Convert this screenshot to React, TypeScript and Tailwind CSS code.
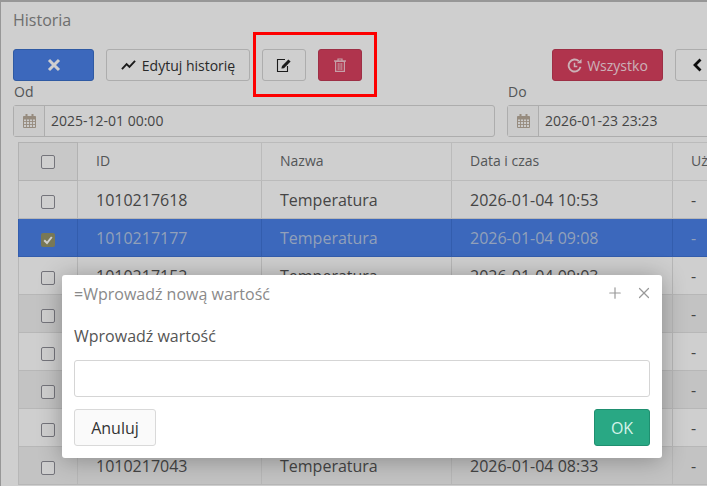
import { Plus, X } from "lucide-react";

const rows = [
  { id: "1010217618", time: "2026-01-04 10:53" },
  { id: "1010217177", time: "2026-01-04 09:08", selected: true },
  { id: "1010217152", time: "2026-01-04 09:03" },
  { id: "1010217131", time: "2026-01-04 08:58" },
  { id: "1010217105", time: "2026-01-04 08:53" },
  { id: "1010217086", time: "2026-01-04 08:48" },
  { id: "1010217064", time: "2026-01-04 08:38" },
  { id: "1010217043", time: "2026-01-04 08:33" },
];

const Check = ({ checked = false, className = "" }: { checked?: boolean; className?: string }) =>
  checked ? (
    <span className={`mx-auto flex h-[14px] w-[14px] items-center justify-center rounded-[2px] bg-[#94946a] text-white ${className}`}>
      <svg viewBox="0 0 10 10" className="h-[10px] w-[10px]" fill="none" stroke="currentColor" strokeWidth="2">
        <path d="M1.2 5.2 4 8l4.8-6" />
      </svg>
    </span>
  ) : (
    <span className={`mx-auto block h-[14px] w-[14px] rounded-[2px] border border-[#8f8f98] bg-white ${className}`} />
  );

const CalendarIcon = () => (
  <svg viewBox="0 0 13 14" className="h-[14px] w-[13px]" fill="none" stroke="currentColor" strokeWidth="1">
    <path d="M.5 2.5h12v11H.5z" />
    <path d="M.5 3h12v2H.5z" fill="currentColor" />
    <path d="M3.5 0v3M9.5 0v3" strokeWidth="2" />
    <path d="M.5 7.5h12M.5 10.5h12M3.5 5v8M6.5 5v8M9.5 5v8" strokeWidth="0.9" />
  </svg>
);

const DateInput = ({ value, className }: { value: string; className: string }) => (
  <div className={`flex h-[32px] rounded-[3px] border border-[#d5d5d5] bg-white ${className}`}>
    <span className="flex w-[31px] shrink-0 items-center justify-center border-r border-[#d5d5d5] bg-[#fafafa] text-[#b9ac9c]">
      <CalendarIcon />
    </span>
    <span className="pl-[6px] text-[14px] leading-[30px] text-[#555]">{value}</span>
  </div>
);

export default function App() {
  return (
    <div className="relative h-[486px] w-[707px] overflow-hidden bg-white font-['Open_Sans',sans-serif] text-[#676a6c]">
      <div className="h-[486px] w-[760px] border-t-2 border-l border-[#bbb] pl-[12px]">
        <h1 className="pt-[8px] text-[16px] leading-[20px] text-[#888]">Historia</h1>

        <div className="mt-[19px] flex h-[32px] items-center">
          <button className="flex h-[32px] w-[81px] items-center justify-center rounded-[3px] border border-[#3a6fc9] bg-[#4a80e8] text-white">
            <svg viewBox="0 0 14 14" className="h-[14px] w-[14px]" fill="none" stroke="currentColor" strokeWidth="3">
              <path d="M2 2l10 10M12 2 2 12" />
            </svg>
          </button>
          <button className="ml-[12px] flex h-[32px] w-[144px] items-center justify-center gap-[6px] rounded-[3px] border border-[#d5d5d5] bg-white text-[14px] text-[#333]">
            <svg viewBox="0 0 16 12" className="h-[12px] w-[15px] text-[#222]" fill="none" stroke="currentColor" strokeWidth="2">
              <path d="M1 10.5 6 5l3 3 6-6.5" />
            </svg>
            Edytuj historię
          </button>
          <button className="ml-[12px] flex h-[32px] w-[44px] items-center justify-center rounded-[3px] border border-[#d5d5d5] bg-white text-[#222]">
            <svg viewBox="0 0 16 16" className="h-[16px] w-[16px]">
              <path d="M9 2.5H1.5v12h10V9" fill="none" stroke="currentColor" strokeWidth="1.1" />
              <path d="M6 9 12.4 2.4l2.2 2.2L8 11.2l-2.6.4z" fill="currentColor" />
            </svg>
          </button>
          <button className="ml-[12px] flex h-[32px] w-[44px] items-center justify-center rounded-[3px] border border-[#c23a56] bg-[#d9415f] text-[#f4c6d0]">
            <svg viewBox="0 0 12 14" className="h-[14px] w-[12px]" fill="none" stroke="currentColor">
              <path d="M0 3h12" strokeWidth="1.4" />
              <path d="M4 3V1h4v2" strokeWidth="1.2" />
              <path d="M1.6 3.5h8.8V13.4H1.6z" strokeWidth="1.2" />
              <path d="M4.2 5v7M6 5v7M7.8 5v7" strokeWidth="0.9" />
            </svg>
          </button>
          <button className="ml-[190px] flex h-[32px] w-[111px] items-center justify-center gap-[5px] rounded-[3px] border border-[#c23a56] bg-[#d9415f] text-[14px] text-[#fbdbe2]">
            <svg viewBox="0 0 16 16" className="h-[15px] w-[15px]" fill="none" stroke="currentColor" strokeWidth="2">
              <path d="M14.4 9.5A6.4 6.4 0 1 1 12.6 3.4" />
              <path d="M8 5v4h3" strokeWidth="1.6" />
              <path d="M10.5 5.5h5V1z" fill="currentColor" stroke="none" />
            </svg>
            Wszystko
          </button>
          <button className="ml-[12px] flex h-[32px] w-[60px] items-center rounded-[3px] border border-[#d5d5d5] bg-white pl-[17px] text-[#111]">
            <svg viewBox="0 0 9 14" className="h-[14px] w-[9px]" fill="none" stroke="currentColor" strokeWidth="2.8">
              <path d="M7.5 1.5 2 7l5.5 5.5" />
            </svg>
          </button>
        </div>

        <div className="flex">
          <div className="w-[482px]">
            <label className="block pt-px pl-px text-[14px] leading-[20px] text-[#676a6c]">Od</label>
            <DateInput value="2025-12-01 00:00" className="mt-[3px] w-[482px]" />
          </div>
          <div className="ml-[12px] w-[260px]">
            <label className="block pt-px pl-px text-[14px] leading-[20px] text-[#676a6c]">Do</label>
            <DateInput value="2026-01-23 23:23" className="mt-[3px] w-[260px]" />
          </div>
        </div>

        <table className="mt-[5px] ml-[5px] w-[740px] table-fixed border-collapse">
          <colgroup>
            <col className="w-[59px]" />
            <col className="w-[184px]" />
            <col className="w-[190px]" />
            <col className="w-[221px]" />
            <col />
          </colgroup>
          <thead>
            <tr className="h-[38px] text-left text-[14px] text-[#676a6c]">
              <th className="border border-[#dcdcdc] bg-[#f7f7f7] font-normal"><Check className="mt-[1px]" /></th>
              <th className="border border-[#e7e7e7] pb-[2px] pl-[18px] font-normal">ID</th>
              <th className="border border-[#e7e7e7] pb-[2px] pl-[18px] font-normal">Nazwa</th>
              <th className="border border-[#e7e7e7] pb-[2px] pl-[18px] font-normal">Data i czas</th>
              <th className="border border-[#e7e7e7] pb-[2px] pl-[18px] font-normal">Użytkownik</th>
            </tr>
          </thead>
          <tbody>
            {rows.map((row, i) => {
              const tone = row.selected
                ? "bg-[#4a80e8] text-[#b4c6e4]"
                : i % 2 === 0
                  ? "bg-white text-[#555]"
                  : "bg-[#f0f0f0] text-[#555]";
              const line = row.selected ? "border-[#3f73d6]" : "border-[#e2e2e2]";
              return (
                <tr key={row.id} className={`h-[38px] text-[16px] ${tone}`}>
                  <td className={`border ${line}`}><Check checked={row.selected} className="mt-[4px]" /></td>
                  <td className={`border ${line} pl-[18px]`}>{row.id}</td>
                  <td className={`border ${line} pl-[18px]`}>Temperatura</td>
                  <td className={`border ${line} pl-[18px]`}>{row.time}</td>
                  <td className={`border ${line} pl-[18px]`}>-</td>
                </tr>
              );
            })}
          </tbody>
        </table>
      </div>

      <div className="absolute inset-0 bg-black/[0.19]" />

      <div className="absolute top-[32px] left-[253px] h-[65px] w-[124px] border-[3px] border-[#fd0000]" />

      <div className="absolute top-[275px] left-[62px] h-[183px] w-[600px] rounded-[3px] bg-white px-[12px] shadow-[0_2px_24px_rgba(0,0,0,0.3)]">
        <div className="flex h-[37px] items-center justify-between">
          <span className="text-[16px] text-[#8a8a8a]">=Wprowadź nową wartość</span>
          <div className="-mr-[3px] mb-[2px] flex items-center gap-[11px] text-[#999]">
            <Plus className="h-[18px] w-[18px]" strokeWidth={1.6} />
            <X className="h-[18px] w-[18px]" strokeWidth={1.6} />
          </div>
        </div>
        <p className="mt-[12px] text-[16px] leading-[24px] text-[#555]">Wprowadź wartość</p>
        <input className="mt-[12px] block h-[37px] w-full rounded-[3px] border border-[#d5d5d5] bg-white" />
        <div className="mt-[12px] flex justify-between">
          <button className="h-[37px] w-[82px] rounded-[3px] border border-[#d9d9d9] bg-[#fafafa] text-[16px] text-[#333]">Anuluj</button>
          <button className="h-[37px] w-[56px] rounded-[3px] border border-[#1f8f70] bg-[#29a884] text-[16px] text-[#d5f3ea]">OK</button>
        </div>
      </div>
    </div>
  );
}
